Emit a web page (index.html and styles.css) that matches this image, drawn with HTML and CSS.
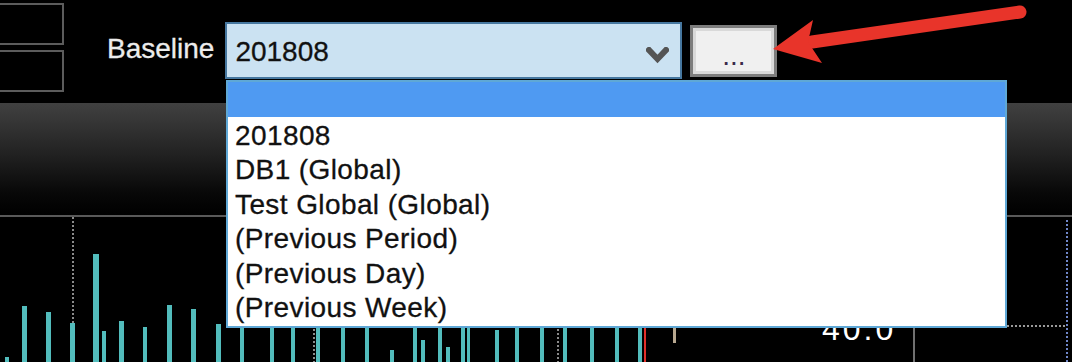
FILE: index.html
```html
<!DOCTYPE html>
<html>
	<head>
		<meta charset="UTF-8">
		<title>Baseline</title>
		<link rel="stylesheet" href="styles.css">
	</head>
	<body>
		<div class="screen">
			<div class="toolbar">
				<div class="side-boxes">
					<div class="side-box"></div>
					<div class="side-box"></div>
				</div>
				<div class="label">Baseline</div>
				<div class="combo">
					<span class="combo-value">201808</span>
					<svg class="chevron" width="23" height="18" viewBox="0 0 23 18">
						<polyline points="3,3 11.5,12 20,3" fill="none" stroke="#555" stroke-width="6" stroke-linecap="square"/>
					</svg>
				</div>
				<div class="dots-button">...</div>
			</div>

			<div class="band"></div>

			<div class="chart">
				<svg width="1072" height="145" viewBox="0 0 1072 145">
					<g fill="#52bcbc">
						<rect x="5" y="140" width="4" height="5"/>
						<rect x="22" y="89" width="5" height="56"/>
						<rect x="46" y="95" width="5" height="50"/>
						<rect x="70" y="106" width="5" height="39"/>
						<rect x="93" y="37" width="6" height="108"/>
						<rect x="102" y="114" width="4" height="31"/>
						<rect x="119" y="104" width="5" height="41"/>
						<rect x="143" y="110" width="4" height="35"/>
						<rect x="167" y="88" width="5" height="57"/>
						<rect x="191" y="92" width="5" height="53"/>
						<rect x="216" y="107" width="5" height="38"/>
						<rect x="240" y="90" width="4" height="55"/>
						<rect x="270" y="90" width="4" height="55"/>
						<rect x="291" y="90" width="4" height="55"/>
						<rect x="316" y="90" width="4" height="55"/>
						<rect x="341" y="90" width="4" height="55"/>
						<rect x="365" y="90" width="4" height="55"/>
						<rect x="390" y="133" width="4" height="12"/>
						<rect x="413" y="90" width="4" height="55"/>
						<rect x="421" y="123" width="4" height="22"/>
						<rect x="438" y="90" width="4" height="55"/>
						<rect x="446" y="130" width="4" height="15"/>
						<rect x="461" y="90" width="4" height="55"/>
						<rect x="467" y="110" width="3" height="35"/>
						<rect x="495" y="113" width="4" height="32"/>
						<rect x="515" y="90" width="4" height="55"/>
						<rect x="540" y="90" width="4" height="55"/>
						<rect x="563" y="90" width="4" height="55"/>
						<rect x="590" y="90" width="4" height="55"/>
						<rect x="615" y="90" width="4" height="55"/>
						<rect x="638" y="90" width="4" height="55"/>
					</g>
					<g stroke-width="2" stroke-dasharray="2 2" fill="none">
						<line x1="73" y1="0" x2="73" y2="106" stroke="#8a8a8a"/>
						<line x1="314" y1="108" x2="314" y2="145" stroke="#8a8a8a"/>
						<line x1="558" y1="108" x2="558" y2="145" stroke="#8a8a8a"/>
						<line x1="1007" y1="109" x2="1066" y2="109" stroke="#9a9a9a"/>
						<line x1="1067" y1="3" x2="1067" y2="145" stroke="#6f86c8"/>
					</g>
					<rect x="644" y="110" width="2" height="35" fill="#e0302a"/>
					<rect x="673" y="110" width="3" height="16" fill="#b8a890"/>
					<rect x="913" y="108" width="2" height="37" fill="#707070"/>
				</svg>
				<div class="axis-value">40.0</div>
			</div>

			<div class="dropdown">
				<div class="dropdown-selected"></div>
				<div class="dropdown-items">
					<div class="dropdown-item">201808</div>
					<div class="dropdown-item">DB1 (Global)</div>
					<div class="dropdown-item">Test Global (Global)</div>
					<div class="dropdown-item">(Previous Period)</div>
					<div class="dropdown-item">(Previous Day)</div>
					<div class="dropdown-item">(Previous Week)</div>
				</div>
			</div>

			<svg class="callout" width="1072" height="80" viewBox="0 0 1072 80">
				<line x1="1020" y1="12" x2="812" y2="42" stroke="#e8342a" stroke-width="13" stroke-linecap="round"/>
				<polygon points="773,49 813,20 808,42 822,63" fill="#e8342a"/>
			</svg>
		</div>
	</body>
</html>
```

FILE: styles.css
```css
body {
	margin: 0;
	background-color: #000;
	font-family: "Liberation Sans", Arial, sans-serif;
	font-size: 28px;
	overflow: hidden;
}

.screen {
	position: relative;
	width: 1072px;
	height: 362px;
	overflow: hidden;
}

/* top row : boxes, label, combo and the ... button */
.toolbar {
	display: flex;
	align-items: flex-start;
	height: 103px;
}

.side-boxes {
	display: flex;
	flex-direction: column;
	gap: 5px;
	margin-top: 3px;
	margin-left: -6px;
}

.side-box {
	width: 66px;
	height: 38px;
	border: 2px solid #5c5c5c;
}

.label {
	margin-left: 43px;
	margin-top: 33px;
	line-height: 32px;
	color: #ececec;
	-webkit-text-stroke: 0.3px #ececec;
}

.combo {
	position: relative;
	display: flex;
	align-items: flex-start;
	box-sizing: border-box;
	width: 457px;
	height: 57px;
	margin-left: 11px;
	margin-top: 22px;
	padding: 12px 0 0 8px;
	background-color: #cbe2f2;
	border: 2px solid #46779f;
	line-height: 32px;
	color: #111;
	-webkit-text-stroke: 0.3px #111;
}

.combo-value {
	flex: 1;
}

.chevron {
	margin-top: 11px;
	margin-right: 11px;
}

.dots-button {
	box-sizing: border-box;
	width: 87px;
	height: 52px;
	margin-left: 8px;
	margin-top: 25px;
	padding-top: 12px;
	background-color: #f0f0f0;
	border: 3px solid #7d7d7d;
	box-shadow: inset 0 0 0 3px #d9d9d9;
	text-align: center;
	line-height: 32px;
	color: #3a2a4a;
}

/* dark header band */
.band {
	height: 112px;
	background: linear-gradient(#404040 0%, #3a3a3a 10%, #222 45%, #080808 80%, #000 100%);
	border-bottom: 2px solid #595959;
}

.chart {
	position: relative;
	height: 145px;
}

.chart svg {
	display: block;
}

.axis-value {
	position: absolute;
	left: 822px;
	top: 94px;
	font-size: 32px;
	line-height: 36px;
	letter-spacing: 3px;
	color: #fff;
}

/* open list of the combo */
.dropdown {
	position: absolute;
	left: 226px;
	top: 80px;
	width: 781px;
	box-sizing: border-box;
	background-color: #fff;
	border: 2px solid #5fa8d6;
}

.dropdown-selected {
	height: 35px;
	background-color: #4f9af2;
}

.dropdown-items {
	padding-top: 1.5px;
}

.dropdown-item {
	padding-left: 7px;
	line-height: 34.5px;
	letter-spacing: 0.4px;
	color: #111;
	-webkit-text-stroke: 0.3px #111;
}

.callout {
	position: absolute;
	left: 0;
	top: 0;
}
```
